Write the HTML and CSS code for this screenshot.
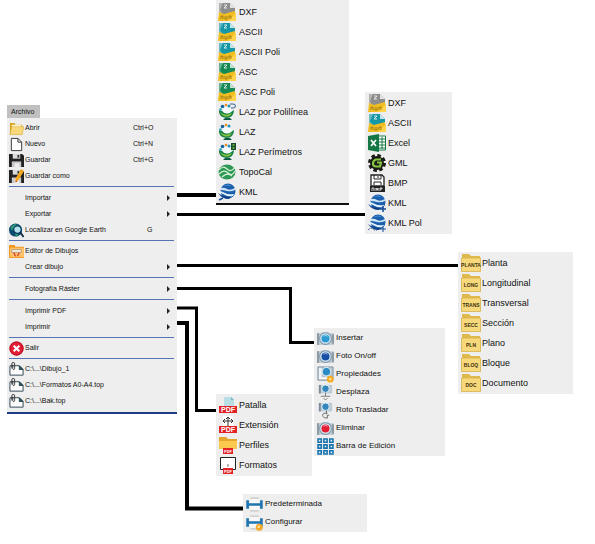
FILE: index.html
```html
<!DOCTYPE html>
<html lang="es">
<head>
    <meta charset="UTF-8">
    <meta name="viewport" content="width=device-width, initial-scale=1">
    <title>Menú Archivo</title>
    <link rel="stylesheet" href="styles.css">
</head>
<body>
    <!-- Iconos compartidos -->
    <svg class="defs" aria-hidden="true">
        <symbol id="i-open" viewBox="0 0 16 16"><path d="M1 2h5l1 2h7v10H1z" fill="#d9a520"/><path d="M3 4h10v5H3z" fill="#fff6d8"/><path d="M3 6h13l-2 8.500H1z" fill="#f7d97c" stroke="#d6a93a" stroke-width=".6"/></symbol>
        <symbol id="i-new" viewBox="0 0 16 16"><path d="M2.500 1.500h7l4 4v9h-11z" fill="#fff" stroke="#333"/><path d="M9.500 1.500v4h4" fill="none" stroke="#333"/></symbol>
        <symbol id="i-save" viewBox="0 0 16 16"><path d="M0 1h14l2 2v12H0z" fill="#222"/><path d="M4 1h8v5H4z" fill="#ddd"/><path d="M9 2h2v3H9z" fill="#333"/><path d="M3 9h10v6H3z" fill="#c9c9c9"/><path d="M6 11h5v4H6z" fill="#eee"/></symbol>
        <symbol id="i-saveas" viewBox="0 0 16 16"><use href="#i-save"/><path d="M13 0l3 2-6 10-3 2 0-4z" fill="#f5a81c"/><path d="M7 12l2 1-2 1z" fill="#b32"/></symbol>
        <symbol id="i-search" viewBox="0 0 16 16"><circle cx="7" cy="7.500" r="7" fill="#0d4a70"/><path d="M2 4l4-3 3 1-4 4-3 2zM6 11l4 1-2 3z" fill="#2f9b7d"/><circle cx="9" cy="7" r="4" fill="#b5e0ee" stroke="#063b5c" stroke-width="1.300"/><path d="M12 10l3.500 5" stroke="#112f45" stroke-width="2"/></symbol>
        <symbol id="i-editor" viewBox="0 0 16 16"><path d="M0 1h6l1 2h9v12H0z" fill="#ef9a25"/><path d="M1 4h15v10H1z" fill="#ffc067"/><path d="M3 6h10v3H3z" fill="#f2efe6" stroke="#94836a" stroke-width=".6"/><path d="M5 9l2 4M9 13l2-4" stroke="#d03b35" stroke-width="1.300"/></symbol>
        <symbol id="i-exit" viewBox="0 0 16 16"><circle cx="8" cy="8" r="7.600" fill="#e31e35"/><circle cx="8" cy="8" r="7" fill="none" stroke="#b30d22"/><path d="M5 5l6 6M11 5l-6 6" stroke="#fff" stroke-width="2.200"/></symbol>
        <symbol id="i-recent" viewBox="0 0 16 16"><path d="M1 4h10l4 4v6H1z" fill="#fff" stroke="#27434d"/><path d="M11 4v4h4z" fill="#1f5561" stroke="#27434d"/><path d="M3 7V2q0-1.500 1.500-1.500T6 2v5q0 1-1 1T4 7V3" fill="none" stroke="#222" stroke-width=".9"/></symbol>

        <symbol id="i-file" viewBox="0 0 18 18"><path d="M1 0h11l5 5v12H1z" fill="currentColor"/><path d="M1 0h4L2 7l3 5H1z" fill="#fff" fill-opacity=".35"/><path d="M12 0v5h5z" fill="#fff" fill-opacity=".75"/><path d="M6 2h3L6 5h3" fill="none" stroke="#fff" stroke-opacity=".8"/><path d="M0 18L1 9l5 2 11-3 1 10z" fill="#f2bd20"/><path d="M18 10l-8 8h8z" fill="#ffd34a"/><path d="M3 16v-3h2v3M7 13v3h2v-3M11 16v-3h2v3" fill="none" stroke="#776018" stroke-width=".6"/></symbol>
        <symbol id="i-laz" viewBox="0 0 18 18"><path d="M1 7q-1 7 8 8 7-1 7-8l-3 2q-5 3-9-1z" fill="#168047"/><path d="M2 9q5 5 12 1-2 4-6 3.500-4-.5-6-4.500z" fill="#8cc63f"/><path d="M5 5q5-3 9 2l-1 2q-4 3-8 0z" fill="#f5fbfd"/><circle cx="4.500" cy="3.500" r="1.800" fill="#18649e"/><circle cx="8" cy="2" r="1.300" fill="#ee8b21"/><circle cx="11" cy="3" r="1.500" fill="#2294c5"/><circle cx="2.500" cy="6.500" r="1.300" fill="#38a6bd"/><path d="M7 15h5l2 2H5z" fill="#0c5a45"/></symbol>
        <symbol id="i-lazpol" viewBox="0 0 18 18"><use href="#i-laz"/><path d="M12 1h3q2.500 0 2.500 2T15 5h-2" fill="none" stroke="#234c8a" stroke-width=".9"/></symbol>
        <symbol id="i-lazper" viewBox="0 0 18 18"><use href="#i-laz"/><path d="M13 0h5v7h-5z" fill="#174d2c"/><path d="M14.500 1h2v2h-2zM14.500 4h2v2h-2z" fill="#65a43a"/></symbol>
        <symbol id="i-topo" viewBox="0 0 18 18"><ellipse cx="9" cy="9" rx="8.500" ry="7.500" fill="#2e9856"/><path d="M1 7q4-5 8-1t8-2M1 11q5-5 9-1t7-2M4 14q5-5 10-1" fill="none" stroke="#d9f1d6" stroke-width="1.200"/></symbol>
        <symbol id="i-kml" viewBox="0 0 18 18"><circle cx="10" cy="8" r="7.500" fill="#1c5fac"/><path d="M3 5q3-1 6 1t8-1v2q-4 2-8 1T3 7z" fill="#cde4f5"/><path d="M0 8q4 0 7 2t9 1l-1 2q-5 1-8-1T1 10z" fill="#e6f2fa"/><path d="M5 3q5-3 9 0-5-1-9 0z" fill="#4d96d6"/><path d="M0 10q5 4 13 4l-2 2Q4 16 0 10z" fill="#0e3f86"/></symbol>
        <symbol id="i-kmlimp" viewBox="0 0 18 18"><use href="#i-kml"/><path d="M1 17l4-2" stroke="#164c96" stroke-width="1.500"/></symbol>
        <symbol id="i-kmlexp" viewBox="0 0 18 18"><use href="#i-kml"/><path d="M15 12v6M12 15h6" stroke="#164c96" stroke-width="1.500"/></symbol>
        <symbol id="i-kmlpol" viewBox="0 0 18 18"><use href="#i-kml"/><path d="M0 16q3-3 5-1t4 1" fill="none" stroke="#3a679e" stroke-dasharray="2 1"/><path d="M15 12v6M12 15h6" stroke="#164c96"/></symbol>
        <symbol id="i-excel" viewBox="0 0 18 18"><path d="M9 2h8.500v14H9z" fill="#fff" stroke="#167a46"/><path d="M10 5h7M10 8h7M10 11h7M10 14h7M14 3v12" stroke="#167a46"/><path d="M0 2l11-2v18L0 16z" fill="#147744"/><path d="M3 6l5 6M8 6l-5 6" stroke="#fff" stroke-width="1.700"/></symbol>
        <symbol id="i-gml" viewBox="0 0 18 18"><circle cx="9" cy="9" r="7.500" fill="none" stroke="#171b14" stroke-width="3" stroke-dasharray="3.500 2.400"/><circle cx="9" cy="9" r="7" fill="#171b14"/><path d="M13 5.500H8Q5 6.500 5 9.500t3 3h4l1-4H9" fill="none" stroke="#85c340" stroke-width="2.200"/></symbol>
        <symbol id="i-bmp" viewBox="0 0 18 18"><path d="M3 1h11l2 2v9H3z" fill="#fff" stroke="#222" stroke-width="1.300"/><path d="M6 1v4h7V1M6 11V8h7v3M10 2v2" fill="none" stroke="#222"/><path d="M2 12h15v6H2z" fill="#222"/><path d="M4 17v-3h2v3M8 17v-3l1 2 1-2v3M12 17v-3h2v1h-2" fill="none" stroke="#fff" stroke-width=".8"/></symbol>

        <symbol id="i-folder" viewBox="0 0 20 18"><path d="M1 0h7l2 2h9v15H1z" fill="#dfb94b"/><path d="M.5 4h19v13.500H.5z" fill="#f7d97c" stroke="#d6b34c" stroke-width=".8"/></symbol>

        <symbol id="i-camera" viewBox="0 0 16 16"><path d="M0 3h3l2-1h6l1 1h4v11H0z" fill="#c3ccd3"/><path d="M0 3h2v11H0z" fill="#8f9ba4"/><path d="M14 4h2v9h-2z" fill="#8f9ba4"/><circle cx="8" cy="8" r="5.500" fill="#dfeaf1" stroke="#7a98ad"/><circle cx="8" cy="8" r="3.800" fill="currentColor"/><path d="M6 6q2-1.500 4 0" stroke="#fff" stroke-opacity=".5" fill="none"/></symbol>
        <symbol id="i-camprop" viewBox="0 0 18 18"><path d="M1 1h16v14H1z" fill="#b8c6d0" stroke="#8293a1"/><path d="M2 2h3v10H2z" fill="#edf3f7"/><circle cx="10" cy="6" r="4.500" fill="#2c8bc4" stroke="#e9f5fb"/><path d="M2 12h14v2H2z" fill="#fff"/><circle cx="14" cy="14" r="3.600" fill="#f5ad25"/><circle cx="14" cy="14" r="1.200" fill="#ffe6a4"/></symbol>
        <symbol id="i-cammove" viewBox="0 0 18 18"><path d="M2 1h14v9H2z" fill="#bdcbd5"/><path d="M2 1h2v9H2z" fill="#7d8c98"/><circle cx="9" cy="5" r="4" fill="#3387bd" stroke="#e9f5fb"/><path d="M9 9v4M4 13h10M7 15l2 2 2-2" fill="none" stroke="#777"/></symbol>
        <symbol id="i-camrot" viewBox="0 0 18 18"><path d="M2 1h14v9H2z" fill="#bdcbd5"/><path d="M2 1h2v9H2z" fill="#7d8c98"/><circle cx="9" cy="5" r="4" fill="#3387bd" stroke="#e9f5fb"/><path d="M10 9v4M11 12q-5-1-5 2t5 3V14h2" fill="none" stroke="#666"/></symbol>
        <symbol id="i-grid" viewBox="0 0 16 16"><path d="M1 1h3v3H1zM6.500 1h3v3h-3zM12 1h3v3h-3zM1 6.500h3v3H1zM6.500 6.500h3v3h-3zM12 6.500h3v3h-3zM1 12h3v3H1zM6.500 12h3v3h-3zM12 12h3v3h-3z" fill="#e9f4fa" stroke="#1874ae" stroke-width="1.500"/></symbol>

        <symbol id="i-print" viewBox="0 0 16 16"><path d="M4 2h8v12H4z" fill="#f8f8f8"/><path d="M4 2h8M4 14h8" stroke="#c4c4c4"/><path d="M1.500 4v8M14.500 4v8M1 8h14" stroke="#1e75b1" stroke-width="2.500"/></symbol>
        <symbol id="i-printcfg" viewBox="0 0 16 16"><use href="#i-print"/><circle cx="12.500" cy="12.500" r="3.300" fill="#f3a92b"/><circle cx="12" cy="12" r="1.200" fill="#ffe19a"/></symbol>
    </svg>

    <main class="diagram">
        <svg class="connectors" aria-hidden="true">
            <path d="M176 214.500H367M176 265.500H460M176 288.500H290.500V342.500H316M176 308H196.500V410.500H218"/>
            <path class="thick" d="M176 195H218M176 323H187V508.500H245"/>
        </svg>

        <nav class="archivo">
            <button class="tab">Archivo</button>
            <div class="menu main">
                <button><svg><use href="#i-open"/></svg>Abrir<kbd>Ctrl+O</kbd></button>
                <button><svg><use href="#i-new"/></svg>Nuevo<kbd>Ctrl+N</kbd></button>
                <button><svg><use href="#i-save"/></svg>Guardar<kbd>Ctrl+G</kbd></button>
                <button><svg><use href="#i-saveas"/></svg>Guardar como</button>
                <hr>
                <button class="more"><svg></svg>Importar</button>
                <button class="more"><svg></svg>Exportar</button>
                <button><svg><use href="#i-search"/></svg>Localizar en Google Earth<kbd class="key">G</kbd></button>
                <hr class="tight">
                <button><svg><use href="#i-editor"/></svg>Editor de Dibujos</button>
                <button class="more"><svg></svg>Crear dibujo</button>
                <hr>
                <button class="more"><svg></svg>Fotografía Ráster</button>
                <hr>
                <button class="more"><svg></svg>Imprimir PDF</button>
                <button class="more"><svg></svg>Imprimir</button>
                <hr class="tight">
                <button><svg><use href="#i-exit"/></svg>Salir</button>
                <hr class="tight">
                <button><svg><use href="#i-recent"/></svg>C:\...\Dibujo_1</button>
                <button><svg><use href="#i-recent"/></svg>C:\...\Formatos A0-A4.top</button>
                <button><svg><use href="#i-recent"/></svg>C:\...\Bak.top</button>
            </div>
        </nav>

        <div class="menu importar">
            <button><svg class="gray"><use href="#i-file"/></svg>DXF</button>
            <button><svg class="teal"><use href="#i-file"/></svg>ASCII</button>
            <button><svg class="teal"><use href="#i-file"/></svg>ASCII Poli</button>
            <button><svg class="green"><use href="#i-file"/></svg>ASC</button>
            <button><svg class="green"><use href="#i-file"/></svg>ASC Poli</button>
            <button><svg><use href="#i-lazpol"/></svg>LAZ por Polilínea</button>
            <button><svg><use href="#i-laz"/></svg>LAZ</button>
            <button><svg><use href="#i-lazper"/></svg>LAZ Perímetros</button>
            <button><svg><use href="#i-topo"/></svg>TopoCal</button>
            <button><svg><use href="#i-kmlimp"/></svg>KML</button>
        </div>

        <div class="menu exportar">
            <button><svg class="gray"><use href="#i-file"/></svg>DXF</button>
            <button><svg class="teal"><use href="#i-file"/></svg>ASCII</button>
            <button><svg><use href="#i-excel"/></svg>Excel</button>
            <button><svg><use href="#i-gml"/></svg>GML</button>
            <button><svg><use href="#i-bmp"/></svg>BMP</button>
            <button><svg><use href="#i-kmlexp"/></svg>KML</button>
            <button><svg><use href="#i-kmlpol"/></svg>KML Pol</button>
        </div>

        <div class="menu dibujo">
            <button><svg viewBox="0 0 20 18"><use href="#i-folder"/><text x="10" y="13">PLANTA</text></svg>Planta</button>
            <button><svg viewBox="0 0 20 18"><use href="#i-folder"/><text x="10" y="13">LONG</text></svg>Longitudinal</button>
            <button><svg viewBox="0 0 20 18"><use href="#i-folder"/><text x="10" y="13">TRANS</text></svg>Transversal</button>
            <button><svg viewBox="0 0 20 18"><use href="#i-folder"/><text x="10" y="13">SECC</text></svg>Sección</button>
            <button><svg viewBox="0 0 20 18"><use href="#i-folder"/><text x="10" y="13">PLN</text></svg>Plano</button>
            <button><svg viewBox="0 0 20 18"><use href="#i-folder"/><text x="10" y="13">BLOQ</text></svg>Bloque</button>
            <button><svg viewBox="0 0 20 18"><use href="#i-folder"/><text x="10" y="13">DOC</text></svg>Documento</button>
        </div>

        <div class="menu foto">
            <button><svg class="sky"><use href="#i-camera"/></svg>Insertar</button>
            <button><svg class="blue"><use href="#i-camera"/></svg>Foto On/off</button>
            <button><svg><use href="#i-camprop"/></svg>Propiedades</button>
            <button><svg><use href="#i-cammove"/></svg>Desplaza</button>
            <button><svg><use href="#i-camrot"/></svg>Roto Trasladar</button>
            <button><svg class="red"><use href="#i-camera"/></svg>Eliminar</button>
            <button><svg><use href="#i-grid"/></svg>Barra de Edición</button>
        </div>

        <div class="menu pdf">
            <button><svg viewBox="0 0 18 18"><path d="M5 1h7l3 3v7H5z" fill="#b9dde5"/><path d="M12 1v3h3z" fill="#79b8c7"/><path d="M0 10h18v7H0z" fill="#e32227"/><text class="big" x="9" y="16">PDF</text></svg>Patalla</button>
            <button><svg viewBox="0 0 18 18"><path d="M4 0h10v10H4z" fill="#fff"/><path d="M4 5h10M9 1v9M6 3L4 5l2 2M12 3l2 2-2 2M7 3l2-2 2 2" fill="none" stroke="#333"/><path d="M0 10h18v7H0z" fill="#e32227"/><text class="big" x="9" y="16">PDF</text></svg>Extensión</button>
            <button><svg viewBox="0 0 18 18"><path d="M0 1h7l2 2h9v10H0z" fill="#e6a62c"/><path d="M0 5h18v8H0z" fill="#fbc94f"/><path d="M4 12h10v6H4z" fill="#e32227"/><text x="9" y="17">PDF</text></svg>Perfiles</button>
            <button><svg viewBox="0 0 18 18"><path d="M1.500 1.500h15v12h-15z" fill="#fff" stroke="#222"/><path d="M9 8v3" stroke="#777"/><path d="M4 12h10v6H4z" fill="#e32227"/><text x="9" y="17">PDF</text></svg>Formatos</button>
        </div>

        <div class="menu imprimir">
            <button><svg><use href="#i-print"/></svg>Predeterminada</button>
            <button><svg><use href="#i-printcfg"/></svg>Configurar</button>
        </div>
    </main>
</body>
</html>
```

FILE: styles.css
```css
* {
    box-sizing: border-box;
}
body {
    margin: 0;
    background-color: #fff;
    color: #111;
    font-family: "Liberation Sans", Arial, sans-serif;
    font-size: 9px;
    line-height: 12px;
}
.defs {
    position: absolute;
    width: 0;
    height: 0;
}
.diagram {
    position: relative;
    min-height: 100vh;
    overflow: hidden;
}
.connectors {
    position: absolute;
    left: 0;
    top: 0;
    width: 100%;
    height: 100%;
}
.connectors path {
    fill: none;
    stroke: #000;
    stroke-width: 3px;
}
.connectors .thick {
    stroke-width: 4px;
}

/* Menus */
.menu {
    position: absolute;
    display: flex;
    flex-direction: column;
    background-color: #eee;
    padding: 1px 3px;
}
button {
    border: none;
    background: none;
    color: inherit;
    font: inherit;
    text-align: left;
    padding: 0;
    cursor: pointer;
}
.menu button {
    display: flex;
    align-items: center;
    gap: 2px;
    height: 20px;
    white-space: nowrap;
}
.menu button:hover {
    background-color: #dde6f5;
}
.menu svg {
    flex: none;
    width: 18px;
    height: 18px;
}

/* Menu principal */
.archivo {
    position: absolute;
    left: 7px;
    top: 105px;
    font-size: 7px;
}
.tab {
    display: block;
    background-color: #c0c0c0;
    width: 33px;
    height: 13px;
    padding: 0 4px;
}
.main {
    position: static;
    width: 170px;
    padding: 2px 2px 3px;
    border-bottom: 2px solid #1d3c85;
}
.main button {
    height: 16px;
    padding-right: 5px;
}
.main svg {
    width: 15px;
    height: 15px;
    margin-right: -1px;
}
.main kbd {
    width: 27px;
    margin-left: auto;
    margin-right: 10px;
    font: inherit;
}
.main .key {
    width: 13px;
}
.main .more::after {
    content: "";
    margin-left: auto;
    border: 3px solid transparent;
    border-left: 3px solid #222;
    border-right: none;
}
hr {
    width: 165px;
    height: 1px;
    margin: 2px 0 3px;
    border: none;
    background-color: #5673b5;
}
hr.tight {
    margin-bottom: 2px;
}

/* Submenus */
.importar {
    left: 216px;
    top: 0;
    width: 133px;
    padding: 2px 2px 1px;
    border-bottom: 2px solid #111;
}
.importar button {
    gap: 3px;
}
.exportar {
    left: 365px;
    top: 92px;
    width: 87px;
}
.dibujo {
    left: 458px;
    top: 252px;
    width: 115px;
}
.dibujo button {
    gap: 1px;
}
.dibujo svg {
    width: 20px;
}
.foto {
    left: 314px;
    top: 328px;
    width: 131px;
    font-size: 8px;
}
.pdf {
    left: 216px;
    top: 394px;
    width: 96px;
}
.imprimir {
    left: 243px;
    top: 494px;
    width: 124px;
    font-size: 8px;
}
.foto button,
.imprimir button {
    height: 18px;
}
.foto svg,
.imprimir svg {
    width: 17px;
    height: 17px;
}
.menu text {
    font-size: 5px;
    font-weight: bold;
    text-anchor: middle;
    fill: #3d3210;
}
.pdf text {
    font-size: 4px;
    fill: #fff;
}
.pdf .big {
    font-size: 7px;
}

/* Colores de los iconos */
.gray { color: #8d8d8d; }
.teal { color: #1697a5; }
.green { color: #168a55; }
.sky { color: #2d9bd3; }
.blue { color: #164fa5; }
.red { color: #e31e35; }
```
